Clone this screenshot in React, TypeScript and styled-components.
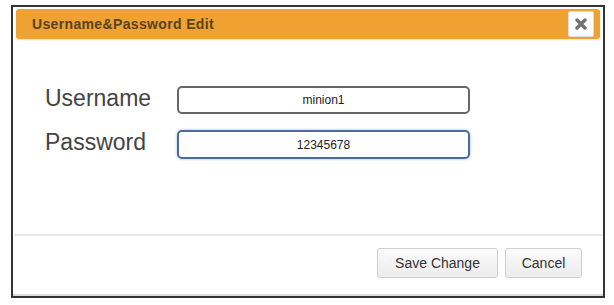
import React, { useState } from "react";
import styled, { createGlobalStyle } from "styled-components";

const GlobalStyle = createGlobalStyle`
	body {
		margin: 0;
		background: #ffffff;
		font-family: "Liberation Sans", Arial, sans-serif;
	}
`;

const Frame = styled.div`
	margin: 5px 0 0 11px;
	width: 594px;
	height: 293px;
	box-sizing: border-box;
	border: 2px solid #333;
	display: flex;
	flex-direction: column;
	box-shadow: inset 0 -2px 0 #dcdcdc;
	background: #fff;
`;

const Header = styled.div`
	margin: 2px 3px 0 3px;
	height: 30px;
	background: #efa232;
	border-radius: 3px;
	display: flex;
	align-items: center;
	justify-content: space-between;
	padding: 0 6px 0 16px;
	box-shadow: 0 1px 2px rgba(0, 0, 0, 0.12);
`;

const Title = styled.div`
	font-size: 14px;
	font-weight: bold;
	letter-spacing: 0.35px;
	color: #5a4322;
`;

const CloseButton = styled.button`
	width: 26px;
	height: 26px;
	padding: 0;
	border: 1px solid #dcdcdc;
	border-radius: 2px;
	background: #fdfdfd;
	display: flex;
	align-items: center;
	justify-content: center;
	cursor: pointer;
`;

const Body = styled.div`
	flex: 1;
	padding: 47px 0 0 32px;
	display: grid;
	grid-template-columns: 132px 293px;
	grid-auto-rows: min-content;
	row-gap: 16px;
	align-items: center;
`;

const Label = styled.label`
	align-self: start;
	font-size: 23px;
	color: #444;
	line-height: 24px;
`;

const Field = styled.input<{ $focused?: boolean }>`
	box-sizing: border-box;
	width: 293px;
	height: ${(p) => (p.$focused ? "29px" : "28px")};
	border: 2px solid ${(p) => (p.$focused ? "#4a6b9c" : "#666")};
	border-radius: 5px;
	box-shadow: ${(p) => (p.$focused ? "0 0 3px #9db8e0" : "none")};
	text-align: center;
	font-family: "Liberation Sans", Arial, sans-serif;
	font-size: 12px;
	color: #222;
	outline: none;
	background: #fff;
`;

const Divider = styled.div`
	margin-left: 2px;
	border-top: 2px solid #e8e8e8;
`;

const Footer = styled.div`
	height: 60px;
	box-sizing: border-box;
	padding: 12px 21px 0 0;
	display: flex;
	justify-content: flex-end;
	align-items: flex-start;
	gap: 7px;
`;

const Button = styled.button<{ $w: number }>`
	width: ${(p) => p.$w}px;
	height: 30px;
	border: 1px solid #cfcfcf;
	border-radius: 3px;
	background: linear-gradient(#fbfbfb, #ececec);
	font-family: "Liberation Sans", Arial, sans-serif;
	font-size: 14px;
	color: #333;
	cursor: pointer;
`;

const CloseIcon = () => (
	<svg width="12" height="12" viewBox="0 0 12 12">
		<path d="M2 2 L10 10 M10 2 L2 10" stroke="#727272" strokeWidth="3.4" strokeLinecap="round" />
	</svg>
);

const App: React.FC = () => {
	const [username, setUsername] = useState<string>("minion1");
	const [password, setPassword] = useState<string>("12345678");

	return (
		<>
			<GlobalStyle />
			<Frame>
				<Header>
					<Title>Username&amp;Password Edit</Title>
					<CloseButton aria-label="close">
						<CloseIcon />
					</CloseButton>
				</Header>
				<Body>
					<Label>Username</Label>
					<Field type="text" value={username} onChange={(e) => setUsername(e.target.value)} />
					<Label>Password</Label>
					<Field $focused type="text" value={password} onChange={(e) => setPassword(e.target.value)} />
				</Body>
				<Divider />
				<Footer>
					<Button $w={121}>Save Change</Button>
					<Button $w={77}>Cancel</Button>
				</Footer>
			</Frame>
		</>
	);
};

export default App;
